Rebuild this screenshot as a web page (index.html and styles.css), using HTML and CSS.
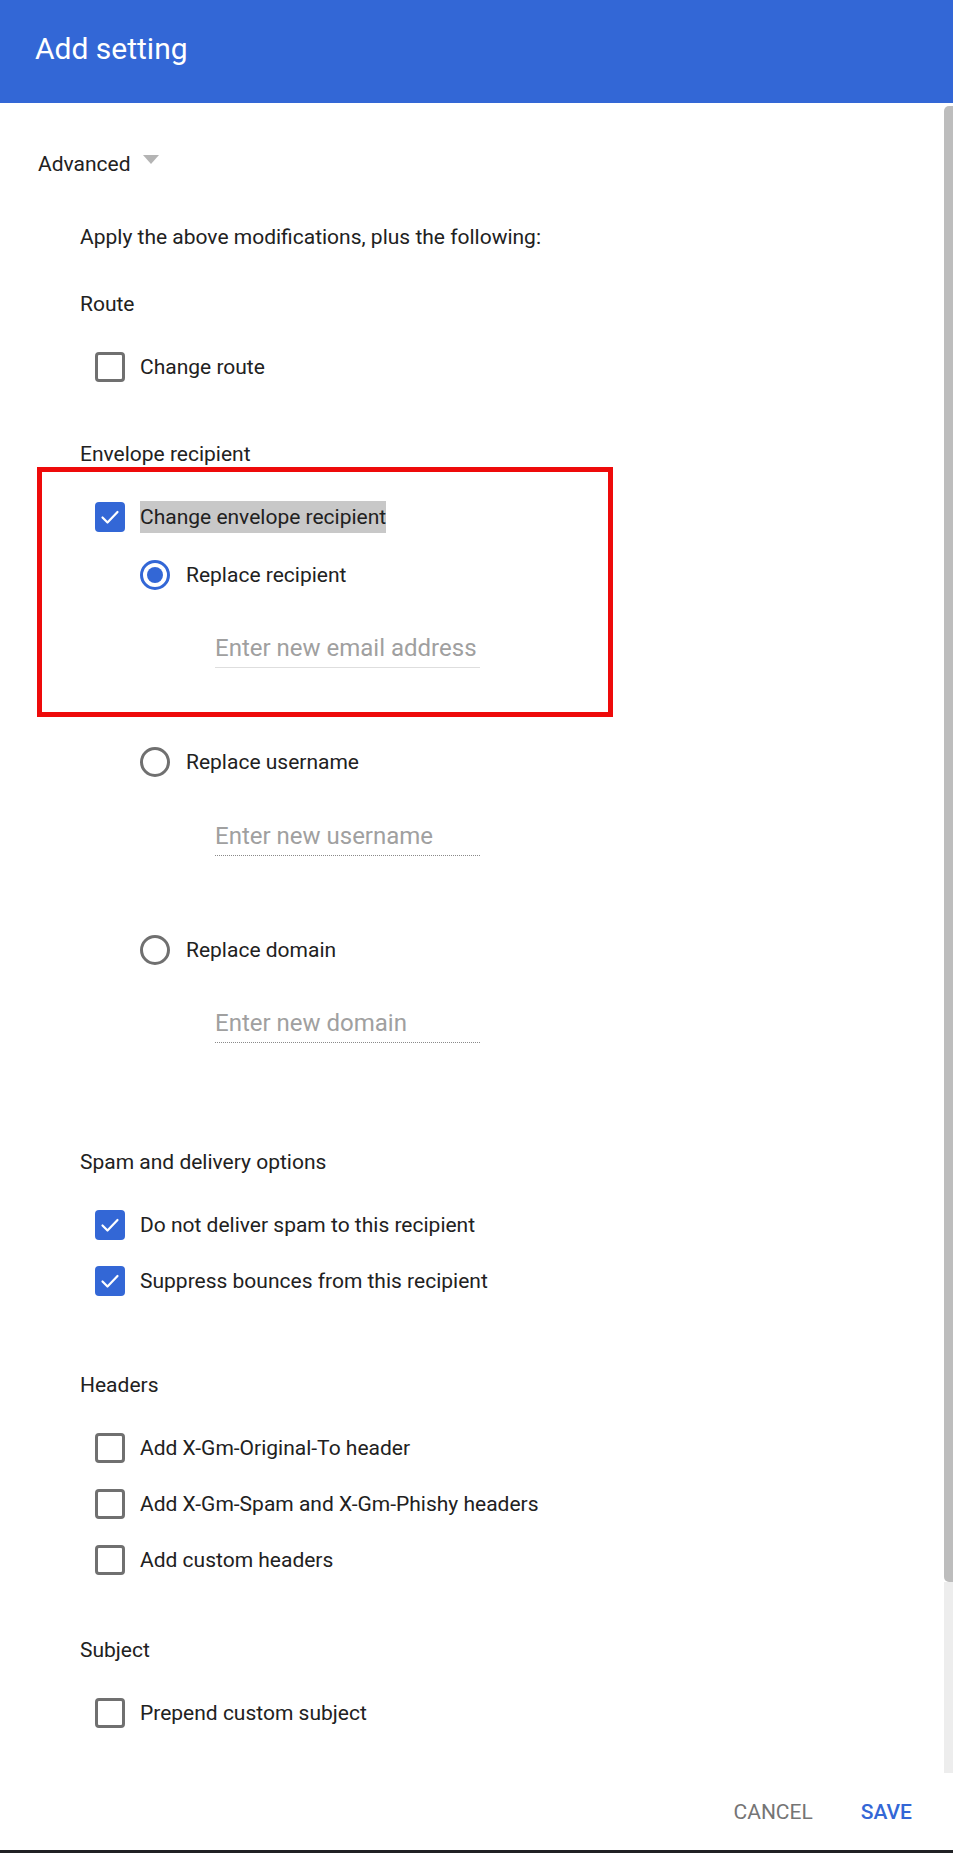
FILE: index.html
```html
<!DOCTYPE html>
<html lang="en">
<head>
<meta charset="utf-8">
<title>Add setting</title>
<link rel="stylesheet" href="styles.css">
</head>
<body>
<div class="dialog">
  <header class="dlg-head">
    <h1 class="dlg-title">Add setting</h1>
  </header>

  <div class="dlg-body">
    <div class="content">
      <div class="adv">
        <span class="adv-text">Advanced</span>
        <span class="adv-caret"></span>
      </div>

      <div class="apply">Apply the above modifications, plus the following:</div>

      <section class="sec sec-route">
        <div class="sec-label">Route</div>
        <div class="opts">
          <div class="row"><span class="box"></span><span class="row-text">Change route</span></div>
        </div>
      </section>

      <section class="sec sec-env">
        <div class="sec-label">Envelope recipient</div>
        <div class="opts">
          <div class="row"><span class="box checked"><svg width="30" height="30" viewBox="0 0 30 30"><path d="M7.5 15.5 L12.5 20.5 L22.5 10" fill="none" stroke="#fff" stroke-width="2.2" stroke-linecap="round" stroke-linejoin="round"/></svg></span><span class="row-text sel">Change envelope recipient</span></div>
        </div>
        <div class="radios">
          <div class="ropt">
            <div class="row"><span class="radio on"><span class="dot"></span></span><span class="row-text">Replace recipient</span></div>
            <input class="field" type="text" placeholder="Enter new email address">
          </div>
          <div class="ropt">
            <div class="row"><span class="radio"></span><span class="row-text">Replace username</span></div>
            <input class="field off" type="text" placeholder="Enter new username" disabled>
          </div>
          <div class="ropt">
            <div class="row"><span class="radio"></span><span class="row-text">Replace domain</span></div>
            <input class="field off" type="text" placeholder="Enter new domain" disabled>
          </div>
        </div>
      </section>

      <section class="sec sec-spam">
        <div class="sec-label">Spam and delivery options</div>
        <div class="opts">
          <div class="row"><span class="box checked"><svg width="30" height="30" viewBox="0 0 30 30"><path d="M7.5 15.5 L12.5 20.5 L22.5 10" fill="none" stroke="#fff" stroke-width="2.2" stroke-linecap="round" stroke-linejoin="round"/></svg></span><span class="row-text">Do not deliver spam to this recipient</span></div>
          <div class="row"><span class="box checked"><svg width="30" height="30" viewBox="0 0 30 30"><path d="M7.5 15.5 L12.5 20.5 L22.5 10" fill="none" stroke="#fff" stroke-width="2.2" stroke-linecap="round" stroke-linejoin="round"/></svg></span><span class="row-text">Suppress bounces from this recipient</span></div>
        </div>
      </section>

      <section class="sec sec-headers">
        <div class="sec-label">Headers</div>
        <div class="opts">
          <div class="row"><span class="box"></span><span class="row-text">Add X-Gm-Original-To header</span></div>
          <div class="row"><span class="box"></span><span class="row-text">Add X-Gm-Spam and X-Gm-Phishy headers</span></div>
          <div class="row"><span class="box"></span><span class="row-text">Add custom headers</span></div>
        </div>
      </section>

      <section class="sec sec-subject">
        <div class="sec-label">Subject</div>
        <div class="opts">
          <div class="row"><span class="box"></span><span class="row-text">Prepend custom subject</span></div>
        </div>
      </section>
    </div>

    <div class="scrollbar">
      <div class="thumb"></div>
      <div class="track"></div>
    </div>
  </div>

  <footer class="dlg-foot">
    <button class="btn btn-cancel" type="button">CANCEL</button>
    <button class="btn btn-save" type="button">SAVE</button>
  </footer>
  <div class="page-edge"></div>

  <div class="annot"></div>
</div>
</body>
</html>
```

FILE: styles.css
```css
* { box-sizing: border-box; }

html, body {
  margin: 0;
  padding: 0;
  background: #ffffff;
}

body {
  font-family: Roboto, "Liberation Sans", Arial, sans-serif;
  color: #212121;
  font-size: 21px;
  line-height: 24px;
}

.dialog {
  position: relative;
  width: 953px;
  height: 1853px;
  display: flex;
  flex-direction: column;
  background: #fff;
}

/* header */
.dlg-head {
  height: 103px;
  flex: none;
  background: #3367d6;
  padding: 29px 35px 0;
}
.dlg-title {
  margin: 0;
  font-size: 30px;
  font-weight: 400;
  line-height: 40px;
  color: #ffffff;
}

/* body */
.dlg-body {
  flex: none;
  height: 1670px;
  display: flex;
}
.content {
  flex: 1;
  padding: 49px 0 0 38px;
}

.adv {
  display: flex;
  align-items: flex-start;
  height: 24px;
}
.adv-caret {
  width: 0;
  height: 0;
  margin: 3px 0 0 12px;
  border-left: 8.5px solid transparent;
  border-right: 8.5px solid transparent;
  border-top: 9px solid #b4b4b4;
}

.apply {
  margin: 49px 0 0 42px;
}

.sec {
  margin-left: 42px;
}
.sec-route { margin-top: 43px; }
.sec-env { margin-top: 60px; }
.sec-spam { margin-top: 107px; }
.sec-headers { margin-top: 77px; }
.sec-subject { margin-top: 63px; }

.opts {
  margin-top: 36px;
  padding-left: 15px;
  display: flex;
  flex-direction: column;
  gap: 26px;
}

.row {
  display: flex;
  align-items: center;
  height: 30px;
}

.box {
  flex: none;
  width: 30px;
  height: 30px;
  border: 3px solid #707070;
  border-radius: 4px;
  margin-right: 15px;
}
.box.checked {
  border: none;
  background: #3367d6;
}
.box svg {
  display: block;
}

.row-text {
  white-space: nowrap;
}
.row-text.sel {
  display: inline-block;
  line-height: 32px;
  background: #c8c8c8;
}

/* radio group */
.radios {
  margin-top: 28px;
  padding-left: 60px;
  display: flex;
  flex-direction: column;
  gap: 79px;
}
.ropt {
  display: flex;
  flex-direction: column;
  align-items: flex-start;
}
.radio {
  flex: none;
  width: 30px;
  height: 30px;
  border: 3px solid #707070;
  border-radius: 50%;
  margin-right: 16px;
  display: flex;
  align-items: center;
  justify-content: center;
}
.radio.on {
  border-color: #3367d6;
}
.dot {
  width: 16px;
  height: 16px;
  border-radius: 50%;
  background: #3367d6;
}

.field {
  margin: 44px 0 0 75px;
  width: 265px;
  height: 34px;
  padding: 0 0 5px 0;
  border: none;
  border-bottom: 1px solid #dedede;
  background: transparent;
  font-family: Roboto, "Liberation Sans", Arial, sans-serif;
  font-size: 24px;
  line-height: 28px;
  color: #212121;
  outline: none;
}
.ropt + .ropt .field {
  margin-top: 45px;
}
.ropt:last-child .field {
  margin-top: 44px;
}
.field.off {
  border-bottom: 1px dotted #8a8a8a;
}
.field::placeholder {
  color: #a0a0a0;
  opacity: 1;
}

/* fake scrollbar */
.scrollbar {
  flex: none;
  width: 9px;
  display: flex;
  flex-direction: column;
  padding-top: 3px;
}
.thumb {
  height: 1476px;
  background: #bdbdbd;
  border-radius: 5px 0 0 5px;
}
.track {
  flex: 1;
  background: #ededed;
}

/* footer */
.dlg-foot {
  flex: none;
  height: 77px;
  display: flex;
  align-items: center;
  justify-content: flex-end;
  gap: 48px;
  padding-right: 41px;
}
.btn {
  border: none;
  background: none;
  padding: 0;
  margin: 0;
  font-family: Roboto, "Liberation Sans", Arial, sans-serif;
  font-size: 21px;
  line-height: 24px;
  cursor: pointer;
}
.btn-cancel {
  color: #757575;
  font-weight: 400;
}
.btn-save {
  color: #3367d6;
  font-weight: 500;
}

.page-edge {
  flex: none;
  height: 3px;
  background: #202124;
}

/* red annotation frame */
.annot {
  position: absolute;
  left: 37px;
  top: 467px;
  width: 576px;
  height: 250px;
  border: 5px solid #ee0a0a;
  pointer-events: none;
}
```
